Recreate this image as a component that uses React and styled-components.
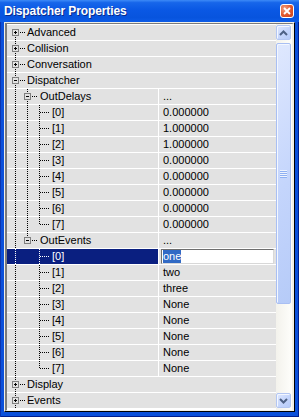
import React from 'react';
import styled, { createGlobalStyle } from 'styled-components';

const ROW_BG = '#e2e2e2';
const SELECTED_BG = '#0a1f80';

const GlobalStyle = createGlobalStyle`
  *, *::before, *::after { box-sizing: border-box; }
  html, body { margin: 0; padding: 0; }
  body { font-family: "Liberation Sans", Arial, sans-serif; background: #fff; }
`;

const dots = (color, dir) => `repeating-linear-gradient(${dir}, ${color} 0 1px, transparent 1px 2px)`;

const Window = styled.div`
  width: 299px;
  height: 417px;
  display: flex;
  flex-direction: column;
  background: #0b50da;
  box-shadow: inset 1px 0 #0a34b0, inset -1px 0 #001f8f, inset 0 -1px #001f8f;
  overflow: hidden;
`;

const TitleBar = styled.div`
  flex: 0 0 22px;
  display: flex;
  align-items: center;
  justify-content: space-between;
  padding: 0 5px 0 4px;
  background: linear-gradient(to bottom, #3d8af7 0%, #1766ea 12%, #0a58e4 45%, #0754de 80%, #0d5ce8 100%);
`;

const Title = styled.span`
  color: #fff;
  font: bold 12px "Liberation Sans", Arial, sans-serif;
  letter-spacing: -0.1px;
  text-shadow: 1px 1px 0 #0a2a8a;
`;

const CloseButton = styled.div`
  width: 14px;
  height: 14px;
  border: 1px solid #fff;
  border-radius: 3px;
  background: radial-gradient(circle at 30% 30%, #f0a080, #e0562c 55%, #c4401c);
  display: flex;
  align-items: center;
  justify-content: center;
`;

const Frame = styled.div`
  flex: 1;
  min-height: 0;
  margin: 0 4px 5px;
  display: flex;
  border: 1px solid;
  border-color: #f1efe6 #000 #000 #f1efe6;
`;

const Panel = styled.div`
  flex: 1;
  min-width: 0;
  display: flex;
  border-style: solid;
  border-width: 1px 2px 1px 2px;
  border-color: #7b7b7b #f1efe6 #f1efe6 #7b7b7b;
  background: #fff;
`;

const List = styled.div`
  flex: 1;
  min-width: 0;
  display: flex;
  flex-direction: column;
  padding-top: 1px;
  overflow: hidden;
`;

const Row = styled.div`
  flex: 0 0 16px;
  display: grid;
  grid-template-columns: 152px 1fr;
  border-bottom: 1px solid #fff;
  background: ${ROW_BG};
  font-size: 11px;
  line-height: 15px;
  color: #000;
`;

const NameCell = styled.div`
  display: flex;
  align-items: stretch;
  padding-left: 2px;
  min-width: 0;
  white-space: nowrap;
  overflow: hidden;
  ${p => (p.$span ? 'grid-column: 1 / -1;' : 'border-right: 1px solid #fff;')}
  background: ${p => (p.$selected ? SELECTED_BG : 'transparent')};
  color: ${p => (p.$selected ? '#fff' : '#000')};
`;

const Guide = styled.span`
  flex: 0 0 12px;
  background: ${p => (p.$on ? `${dots(p.$color, 'to bottom')} 6px 0 / 1px 100% no-repeat` : 'none')};
`;

const Connector = styled.span`
  flex: 0 0 16px;
  display: flex;
  align-items: center;
  padding-left: 3px;
  background: ${p => [
    p.$top && `${dots(p.$color, 'to bottom')} 6px 0 / 1px 8px no-repeat`,
    p.$bottom && `${dots(p.$color, 'to bottom')} 6px 8px / 1px 7px no-repeat`,
    `${dots(p.$color, 'to right')} 7px 7px / 9px 1px no-repeat`,
  ].filter(Boolean).join(', ')};
`;

const Expander = styled.span`
  width: 7px;
  height: 7px;
  border: 1px solid #808080;
  background:
    linear-gradient(#000, #000) center / 3px 1px no-repeat,
    ${p => (p.$open ? '' : 'linear-gradient(#000, #000) center / 1px 3px no-repeat,')}
    ${ROW_BG};
`;

const Label = styled.span`
  padding-left: ${p => (p.$deep ? 3 : 2)}px;
`;

const ValueCell = styled.div`
  padding-left: 4px;
  white-space: nowrap;
  overflow: hidden;
`;

const Editor = styled.div`
  margin: 0 2px 0 -2px;
  height: 15px;
  display: flex;
  align-items: center;
  padding-left: 1px;
  background: #fff;
  border: 1px solid;
  border-color: #6f6f6f #d8d8d8 #d8d8d8 #6f6f6f;
  line-height: 13px;
`;

const SelectedText = styled.span`
  background: #316ac5;
  color: #fff;
`;

const ScrollBar = styled.div`
  flex: 0 0 16px;
  display: flex;
  flex-direction: column;
  padding: 1px 1px 2px 0;
  background: linear-gradient(to right, #f3f2ec, #fefefb);
`;

const scrollFace = `
  border: 1px solid #b3c6f2;
  border-radius: 2px;
  background: linear-gradient(135deg, #dfe8fe, #c4d5fc 55%, #b6cbf8);
  box-shadow: inset 1px 1px 0 #f3f7ff;
  display: flex;
  align-items: center;
  justify-content: center;
`;

const ScrollButton = styled.div`
  flex: 0 0 15px;
  ${scrollFace}
`;

const Track = styled.div`
  flex: 1;
  display: flex;
  flex-direction: column;
`;

const Thumb = styled.div`
  margin-top: 3px;
  flex: 0 0 261px;
  ${scrollFace}
  border-color: #a9bff3;
`;

const Grip = styled.span`
  width: 7px;
  height: 8px;
  background: repeating-linear-gradient(to bottom, #eef3fe 0 1px, #8fb0f2 1px 2px);
`;

const Chevron = ({ down }) => (
  <svg width="9" height="6" viewBox="0 0 9 6">
    <polyline
      points={down ? '1,1 4.5,4.5 8,1' : '1,5 4.5,1.5 8,5'}
      fill="none"
      stroke="#4d6185"
      strokeWidth="2"
    />
  </svg>
);

const outDelays = ['0.000000', '1.000000', '1.000000', '0.000000', '0.000000', '0.000000', '0.000000', '0.000000'];
const outEvents = ['one', 'two', 'three', 'None', 'None', 'None', 'None', 'None'];

const group = (label, box, top = true) => ({ label, guides: [], top, bottom: true, box, group: true });

const rows = [
  group('Advanced', 'plus', false),
  group('Collision', 'plus'),
  group('Conversation', 'plus'),
  group('Dispatcher', 'minus'),
  { label: 'OutDelays', guides: [true], top: true, bottom: true, box: 'minus', value: '...' },
  ...outDelays.map((value, i) => ({ label: `[${i}]`, guides: [true, true], top: true, bottom: i < 7, value })),
  { label: 'OutEvents', guides: [true], top: true, bottom: false, box: 'minus', value: '...' },
  ...outEvents.map((value, i) => ({
    label: `[${i}]`, guides: [true, false], top: true, bottom: i < 7, value, editing: i === 0,
  })),
  group('Display', 'plus'),
  group('Events', 'plus'),
];

function PropertyRow({ row }) {
  const color = row.editing ? '#fff' : '#000';
  return (
    <Row>
      <NameCell $span={row.group} $selected={row.editing}>
        {row.guides.map((on, i) => <Guide key={i} $on={on} $color={color} />)}
        <Connector $top={row.top} $bottom={row.bottom} $color={color}>
          {row.box && <Expander $open={row.box === 'minus'} />}
        </Connector>
        <Label $deep={row.guides.length > 0}>{row.label}</Label>
      </NameCell>
      {!row.group && (
        <ValueCell>
          {row.editing ? (
            <Editor><SelectedText>{row.value}</SelectedText></Editor>
          ) : row.value}
        </ValueCell>
      )}
    </Row>
  );
}

export default function App() {
  return (
    <>
      <GlobalStyle />
      <Window>
        <TitleBar>
          <Title>Dispatcher Properties</Title>
          <CloseButton>
            <svg width="8" height="8" viewBox="0 0 8 8">
              <path d="M1 1 L7 7 M7 1 L1 7" stroke="#fff" strokeWidth="1.8" />
            </svg>
          </CloseButton>
        </TitleBar>
        <Frame>
          <Panel>
            <List>
              {rows.map((row, i) => <PropertyRow key={i} row={row} />)}
            </List>
            <ScrollBar>
              <ScrollButton><Chevron /></ScrollButton>
              <Track>
                <Thumb><Grip /></Thumb>
              </Track>
              <ScrollButton><Chevron down /></ScrollButton>
            </ScrollBar>
          </Panel>
        </Frame>
      </Window>
    </>
  );
}
